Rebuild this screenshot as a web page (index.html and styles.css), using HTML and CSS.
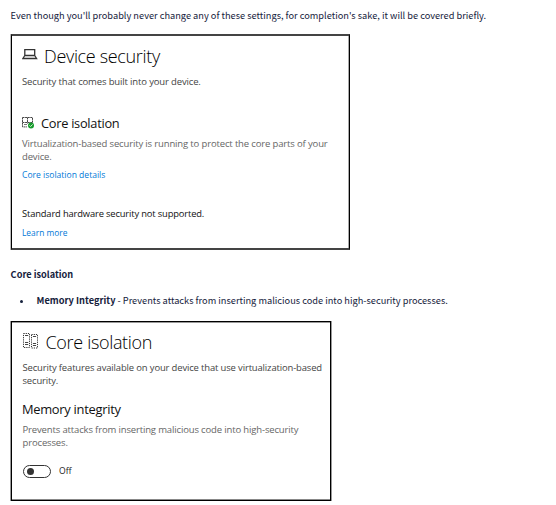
FILE: index.html
```html
<!DOCTYPE html>
<html lang="en">
<head>
<meta charset="utf-8">
<title>Device security</title>
<link rel="stylesheet" href="styles.css">
</head>
<body>
<main class="article">
  <p class="intro">Even though you'll probably never change any of these settings, for completion's sake, it will be covered briefly.</p>

  <section class="panel panel-device">
    <h1 class="title">
      <svg class="icon-title" width="16" height="16" viewBox="0 0 16 16" fill="none" stroke="#333" stroke-width="1.3"><path d="M2.8 8.5V2.6h9.9v5.9zM2.8 8.5L.9 11.5h13.7L12.7 8.5"/></svg>
      <span class="device-title">Device security</span>
    </h1>
    <p class="text text-dark device-lead">Security that comes built into your device.</p>
    <h2 class="subtitle subtitle-icon">
      <svg width="13" height="14" viewBox="0 0 13 14" fill="none"><path d="M.5 1.5h10v5M.5 1.5v9.4h4.5M5.5 1.5v6M.5 6.5h10" stroke="#444" stroke-width="1" stroke-dasharray="2 .6"/><path d="M2 8.5h3" stroke="#777"/><circle cx="9" cy="9.4" r="3" fill="#169c2c"/><path d="M7.5 9.4l1.1 1.1 2-2.1" stroke="#fff" stroke-width=".8"/></svg>
      <span>Core isolation</span>
    </h2>
    <p class="text">Virtualization-based security is running to protect the core parts of your<br>device.</p>
    <a class="link link-details">Core isolation details</a>
    <p class="text text-black hardware">Standard hardware security not supported.</p>
    <a class="link link-more">Learn more</a>
  </section>

  <h3 class="section-name">Core isolation</h3>
  <ul class="list">
    <li><strong>Memory Integrity</strong> - Prevents attacks from inserting malicious code into high-security processes.</li>
  </ul>

  <section class="panel panel-core">
    <h1 class="title title-core">
      <svg class="icon-title" width="16" height="17" viewBox="0 0 16 17" fill="none"><g stroke="#333" stroke-width="1" stroke-dasharray="1.2 1"><path d="M.5 .5h6v14h-6zM8.5 1.5h6v13.5h-6z"/></g><path d="M2 9.5h3.2M2 11.5h3.2M9.9 10.5h3.2M9.9 12.5h3.2M2 2.5h3.2M9.9 3.5h3.2" stroke="#444"/></svg>
      <span>Core isolation</span>
    </h1>
    <p class="text text-dark features">Security features available on your device that use virtualization-based<br>security.</p>
    <h2 class="subtitle memory">Memory integrity</h2>
    <p class="text attacks">Prevents attacks from inserting malicious code into high-security<br>processes.</p>
    <div class="switch-row"><span class="switch"></span><span>Off</span></div>
  </section>
</main>
</body>
</html>
```
FILE: styles.css
```css
* { box-sizing: border-box; }
body { margin: 0; background: #fff; color: #15213c; font-family: "Noto Sans CJK SC", sans-serif; font-size: 9.24px; }
h1, h2, h3, p, ul { margin: 0; padding: 0; }
.article { padding: 7px 0 0 11px; white-space: nowrap; }
.intro { line-height: 16px; height: 27px; margin-left: -0.4px; }
.panel { font-family: "Open Sans", sans-serif; border: 1px solid #000; color: #222; }
.panel-device { width: 339px; height: 216px; padding: 8px 10px; border-width: 2px 1px; border-top-color: #444; border-bottom-color: #444; box-shadow: -1px 0 #bbb, inset -1px 0 #aaa; }
.panel-core { width: 320px; height: 180px; padding: 8px 10.5px; box-shadow: -1px 0 #999, 1px 0 #999, inset 0 1px #999, inset 0 -1px #888; }
.title { display: flex; gap: 6px; height: 24px; line-height: 24px; font-size: 18px; letter-spacing: -0.33px; font-weight: 300; color: #000; }
.title-core { gap: 7px; }
.icon-title { flex: none; margin-top: 3px; }
.text { font-size: 9.5px; letter-spacing: -0.145px; line-height: 13px; color: #666; }
.text-dark { color: #444; }
.text-black { font-size: 9.35px; color: #111; }
.device-lead { margin-top: 7px; }
.subtitle { font-size: 12.8px; letter-spacing: -0.27px; font-weight: 400; line-height: 18px; color: #111; }
.subtitle-icon { display: flex; align-items: center; gap: 6px; margin: 26px 0 5px; }
.link { display: block; font-size: 8.56px; line-height: 13px; color: #0078d7; }
.link-details { margin-top: 6px; }
.hardware { margin-top: 25px; }
.link-more { font-size: 8.4px; margin-top: 6px; }
.section-name { margin: 16px 0 0 -0.4px; font-size: 9.2px; line-height: 16px; }
.list { list-style: none; margin-top: 10px; height: 29px; line-height: 16px; }
.list li { display: flex; white-space: pre; }
.list li::before { content: ""; width: 3px; height: 3px; margin: 8px 13.5px 0 9px; border-radius: 50%; background: #15213c; }
.features { font-size: 9.46px; margin-top: 7px; }
.memory { font-size: 12.9px; margin: 13px 0 0 -0.6px; }
.attacks { margin-top: 5px; }
.switch-row { display: flex; align-items: center; gap: 8.5px; height: 14px; margin-top: 15px; font-size: 8.6px; }
.switch { width: 28px; height: 13px; padding: 2px; border: 1.4px solid #333; border-radius: 7px; }
.switch::before { content: ""; display: block; width: 7px; height: 7px; margin-left: 1px; border-radius: 50%; background: #333; }
```
